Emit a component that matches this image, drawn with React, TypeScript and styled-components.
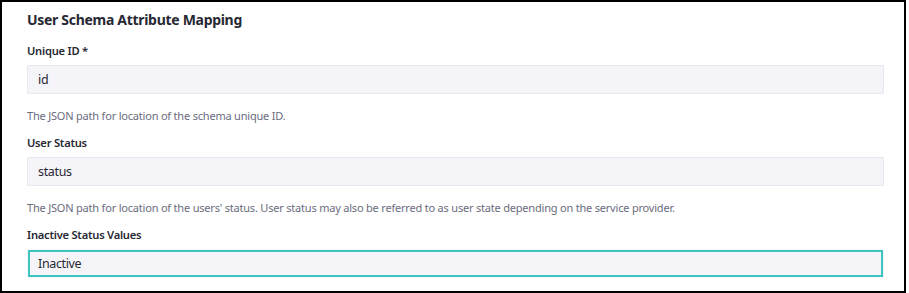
import styled, { createGlobalStyle } from "styled-components";

const GlobalStyle = createGlobalStyle`
  body {
    margin: 0;
    background: #fff;
    font-family: "Noto Sans", "Open Sans", sans-serif;
  }
`

const Panel = styled.section`
  box-sizing: border-box;
  width: 906px;
  height: 293px;
  border: 2px solid #000;
  padding: 8px 20px 0 25px;
  background: #fff;
`

const Title = styled.h3`
  margin: 0 0 12px;
  font-size: 14px;
  line-height: 20px;
  font-weight: 700;
  letter-spacing: -0.3px;
  color: #272833;
`

const Field = styled.div`
  display: flex;
  flex-direction: column;
  margin-bottom: 10px;
`

const Label = styled.label`
  font-size: 11.2px;
  line-height: 18px;
  font-weight: 600;
  letter-spacing: -0.25px;
  color: #272833;
  margin-bottom: 5px;
`

const Input = styled.input<{ $focused?: boolean }>`
  box-sizing: border-box;
  width: 100%;
  height: 29px;
  padding: 0 10px;
  font-family: inherit;
  font-size: 12.5px;
  letter-spacing: -0.35px;
  color: #272833;
  background: #f5f5f9;
  border: 1px solid ${p => (p.$focused ? "transparent" : "#e7e7ed")};
  box-shadow: ${p => (p.$focused ? "inset 0 0 0 2px rgb(64, 196, 194)" : "none")};
  border-radius: 1px;
  outline: none;
`

const Help = styled.div`
  margin-top: 14px;
  font-size: 11px;
  line-height: 16px;
  letter-spacing: -0.2px;
  color: #6b6c7e;
`

const fields = [
    {label: "Unique ID *", value: "id", help: "The JSON path for location of the schema unique ID."},
    {
        label: "User Status",
        value: "status",
        help: "The JSON path for location of the users' status. User status may also be referred to as user state depending on the service provider.",
    },
    {label: "Inactive Status Values", value: "Inactive", focused: true},
]

export default function App() {
    return (
        <>
            <GlobalStyle/>
            <Panel>
                <Title>User Schema Attribute Mapping</Title>
                {fields.map(f => (
                    <Field key={f.label}>
                        <Label>{f.label}</Label>
                        <Input defaultValue={f.value} $focused={!!f.focused}/>
                        {f.help && <Help>{f.help}</Help>}
                    </Field>
                ))}
            </Panel>
        </>
    )
}
